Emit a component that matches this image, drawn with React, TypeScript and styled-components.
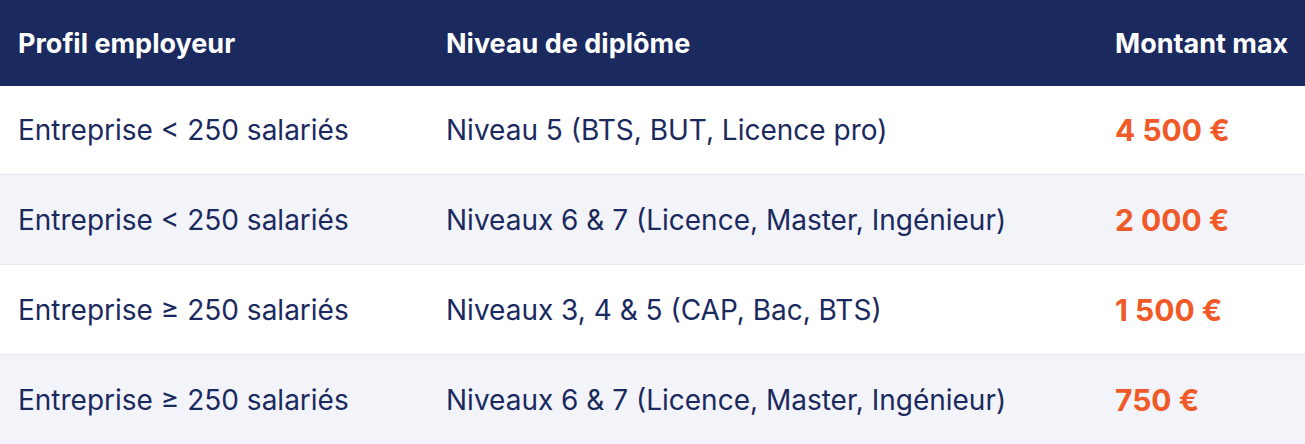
import styled, { createGlobalStyle } from 'styled-components';

const GlobalStyle = createGlobalStyle`
    html, body {
        margin: 0;
        padding: 0;
        background: #ffffff;
    }
    body {
        font-family: Inter, "Noto Sans", sans-serif;
    }
`;

const Table = styled.table`
    width: 1305px;
    border-collapse: separate;
    border-spacing: 0;
    table-layout: fixed;
    color: #1b2a5e;
`;

const HeadCell = styled.th<{ $w?: number }>`
    width: ${(p) => (p.$w ? `${p.$w}px` : 'auto')};
    height: 86px;
    padding: 0 18px;
    background: #1b2a5e;
    color: #ffffff;
    font-size: 27px;
    font-weight: 700;
    text-align: left;
    white-space: nowrap;
    box-sizing: border-box;
`;

const Row = styled.tr<{ $alt: boolean }>`
    background: ${(p) => (p.$alt ? '#f3f4f9' : '#ffffff')};
`;

const Cell = styled.td<{ $first?: boolean }>`
    height: ${(p) => (p.$first ? 89 : 90)}px;
    padding: 0 18px;
    border-bottom: 1px solid #e4e8f1;
    font-size: 28px;
    font-weight: 400;
    white-space: nowrap;
    box-sizing: border-box;
`;

const Amount = styled(Cell)`
    color: #f05a28;
    font-size: 30px;
    font-weight: 700;
`;

const rows = [
    { profil: 'Entreprise < 250 salariés', niveau: 'Niveau 5 (BTS, BUT, Licence pro)', montant: '4 500 €' },
    { profil: 'Entreprise < 250 salariés', niveau: 'Niveaux 6 & 7 (Licence, Master, Ingénieur)', montant: '2 000 €' },
    { profil: 'Entreprise ≥ 250 salariés', niveau: 'Niveaux 3, 4 & 5 (CAP, Bac, BTS)', montant: '1 500 €' },
    { profil: 'Entreprise ≥ 250 salariés', niveau: 'Niveaux 6 & 7 (Licence, Master, Ingénieur)', montant: '750 €' },
];

const App = () => {
    return (
        <>
            <GlobalStyle />
            <Table>
                <thead>
                    <tr>
                        <HeadCell $w={428}>Profil employeur</HeadCell>
                        <HeadCell $w={669}>Niveau de diplôme</HeadCell>
                        <HeadCell>Montant max</HeadCell>
                    </tr>
                </thead>
                <tbody>
                    {rows.map((r, i) => (
                        <Row key={i} $alt={i % 2 === 1}>
                            <Cell $first={i === 0}>{r.profil}</Cell>
                            <Cell $first={i === 0}>{r.niveau}</Cell>
                            <Amount $first={i === 0}>{r.montant}</Amount>
                        </Row>
                    ))}
                </tbody>
            </Table>
        </>
    );
};

export default App;
